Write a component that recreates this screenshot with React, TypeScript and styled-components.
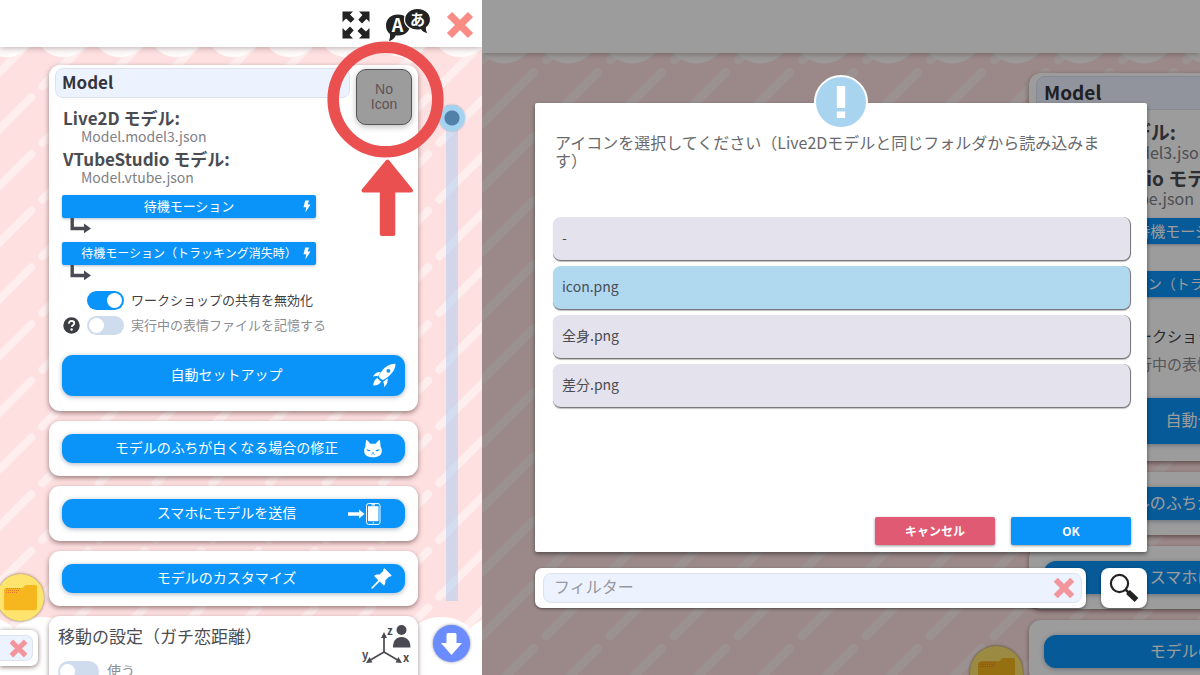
import React, { useState } from "react";
import styled, { createGlobalStyle, css, ThemeProvider } from "styled-components";

const FONT = '"Noto Sans CJK JP", "Noto Sans", sans-serif';
const BLUE = "#0a93f8";

/* Every size inside a settings panel is multiplied by the panel's scale. */
type Scaled = { theme: { k: number } };
const u = (n: number) => (p: Scaled) => `${Math.round(n * p.theme.k)}px`;

const GlobalStyle = createGlobalStyle`
  * { box-sizing: border-box; }
  body { margin: 0; font-family: ${FONT}; color: #4b4c52; }
  button, input { font-family: inherit; color: inherit; }
  button { border: 0; padding: 0; margin: 0; cursor: pointer; }
  svg { display: block; flex: none; }
`;

/* ---------- page ---------- */

const Page = styled.div`
  display: grid;
  grid-template-columns: 482px minmax(0, 1fr);
  height: 100vh;
  overflow: hidden;
`;

const Pane = styled.section`
  position: relative;
  isolation: isolate;
  display: flex;
  flex-direction: column;
  overflow: hidden;
  background: #fee0e0;
`;

const Wallpaper = styled.svg`
  position: absolute;
  inset: 0;
  z-index: -1;
  width: 100%;
  height: 100%;
`;

const Clouds = styled.svg`
  position: absolute;
  left: 0;
  bottom: 0;
  z-index: -1;
  width: 100%;
  height: 58px;
`;

const TopBar = styled.header`
  flex: none;
  display: flex;
  align-items: center;
  justify-content: flex-end;
  gap: 15px;
  height: ${u(47)};
  padding: 2px 8px 0 0;
  background: #fff;
  box-shadow: 0 1px 6px rgba(60, 30, 30, 0.35);
`;

const IconButton = styled.button`
  display: grid;
  place-items: center;
  background: none;
`;

/* ---------- settings column ---------- */

const PaneBody = styled.div<{ $left: number }>`
  flex: 1;
  min-height: 0;
  display: flex;
  align-items: flex-start;
  padding-left: ${(p) => p.$left}px;
  padding-top: ${u(18)};
`;

const CardColumn = styled.div`
  flex: none;
  display: flex;
  flex-direction: column;
  gap: ${u(10)};
  width: ${u(369)};
`;

const Card = styled.div`
  padding: ${u(13)};
  border-radius: ${u(11)};
  background: #fff;
  box-shadow: 0 2px 5px rgba(60, 20, 20, 0.5);
`;

const ModelCardBox = styled(Card)`
  padding: ${u(3)} ${u(6)} ${u(15)};
`;

const ModelTop = styled.div`
  display: flex;
  gap: ${u(6)};
`;

const ModelInfo = styled.div`
  flex: 1;
  min-width: 0;
`;

const NameInput = styled.input`
  display: block;
  width: 100%;
  height: ${u(30)};
  padding: 0 ${u(6)} ${u(3)};
  border: 1px solid #dde3ee;
  border-radius: ${u(8)};
  background: #edf2ff;
  font-size: ${u(17)};
  font-weight: 700;
  color: #33353b;
`;

const FileList = styled.dl`
  margin: ${u(11)} 0 ${u(9)};
  padding-left: ${u(8)};
  display: grid;
`;

const FileKind = styled.dt`
  font-size: ${u(17)};
  font-weight: 700;
  line-height: ${u(18)};
  white-space: nowrap;
`;

const FileName = styled.dd`
  margin: 0 0 ${u(5)};
  padding-left: ${u(18)};
  font-size: ${u(14)};
  line-height: ${u(18)};
  color: #808186;
  &:last-child { margin-bottom: 0; }
`;

const NoIconButton = styled.button`
  flex: none;
  width: ${u(56)};
  height: ${u(56)};
  margin-top: 1px;
  border: 1px solid #55565a;
  border-radius: ${u(10)};
  background: #9c9c9c;
  box-shadow: 0 2px 6px rgba(0, 0, 0, 0.25);
  font-family: "Liberation Sans Narrow", "Liberation Sans", sans-serif;
  font-size: ${u(14)};
  line-height: ${u(15)};
  color: #5f5155;
`;

const MotionList = styled.div`
  padding-left: ${u(7)};
  width: ${u(261)};
`;

const MotionButton = styled.button<{ $small?: boolean }>`
  display: grid;
  grid-template-columns: ${u(18)} 1fr ${u(18)};
  align-items: center;
  width: 100%;
  height: ${u(23)};
  padding-bottom: 1px;
  border-radius: 2px;
  background: ${BLUE};
  box-shadow: 0 1px 3px rgba(0, 40, 90, 0.3);
  color: #fff;
  font-size: ${(p) => u(p.$small ? 12 : 13)(p)};
  line-height: ${u(20)};
  white-space: nowrap;
  & > span { grid-column: 2; }
  & > svg { justify-self: end; margin-right: ${u(5)}; }
`;

const ElbowRow = styled.div`
  height: ${u(24)};
  padding-left: ${u(8)};
`;

const ToggleList = styled.div`
  display: grid;
  gap: ${u(6)};
  padding: ${u(2)} 0 0 ${u(8)};
`;

const ToggleRow = styled.div`
  display: flex;
  align-items: center;
  height: ${u(19)};
`;

const HelpSlot = styled.span`
  width: ${u(24)};
`;

const ToggleLabel = styled.label<{ $off?: boolean; $large?: boolean }>`
  display: flex;
  align-items: center;
  gap: ${(p) => u(p.$large ? 8 : 7)(p)};
  font-size: ${(p) => u(p.$large ? 14 : 13)(p)};
  line-height: ${u(19)};
  white-space: nowrap;
  color: ${(p) => (p.$off ? "#8c8d92" : "#3f4046")};
  & > span { padding-bottom: 2px; }
`;

const Switch = styled.input<{ $large?: boolean }>`
  appearance: none;
  flex: none;
  display: flex;
  align-items: center;
  width: ${(p) => u(p.$large ? 41 : 37)(p)};
  height: ${(p) => u(p.$large ? 21 : 19)(p)};
  margin: 0;
  padding: 0 2px;
  border-radius: 12px;
  background: #cfdcee;
  &::before {
    content: "";
    width: ${u(15)};
    height: ${u(15)};
    border-radius: 50%;
    background: #fff;
  }
  &:checked { background: ${BLUE}; justify-content: flex-end; }
`;

const ActionButton = styled.button<{ $tall?: boolean }>`
  display: grid;
  grid-template-columns: 1fr ${u(38)};
  align-items: center;
  width: 100%;
  height: ${(p) => u(p.$tall ? 41 : 29)(p)};
  padding: 0 ${u(4)} 0 ${u(28)};
  border-radius: ${u(11)};
  background: ${BLUE};
  box-shadow: 0 1px 5px rgba(0, 40, 90, 0.35);
  color: #fff;
  font-size: ${u(14)};
  line-height: ${u(20)};
  white-space: nowrap;
`;

const ActionLabel = styled.span`
  padding-bottom: 3px;
`;

const ActionIcon = styled.span<{ $inset: number }>`
  display: flex;
  justify-content: flex-end;
  padding-right: ${(p) => u(p.$inset)(p)};
`;

const SetupSlot = styled.div`
  padding: ${u(20)} ${u(7)} 0;
`;

const DistanceCard = styled(Card)`
  padding: ${u(8)} ${u(7)} ${u(10)} ${u(9)};
`;

const DistanceHead = styled.div`
  display: flex;
  justify-content: space-between;
  height: ${u(37)};
`;

const DistanceTitle = styled.h2`
  margin: 0;
  font-size: ${u(17)};
  font-weight: 400;
  line-height: ${u(23)};
  white-space: nowrap;
`;

/* ---------- right edge of the settings pane ---------- */

const ScrollRail = styled.div`
  flex: 1;
  align-self: stretch;
  display: flex;
  flex-direction: column;
  align-items: center;
  gap: 24px;
  padding: 40px 0 13px 3px;
`;

const ScrollRange = styled.input`
  appearance: none;
  writing-mode: vertical-lr;
  flex: 1;
  min-height: 0;
  width: 26px;
  margin: 0;
  background: none;
  &::-webkit-slider-runnable-track {
    width: 26px;
    background: linear-gradient(rgba(176, 206, 242, 0.55), rgba(176, 206, 242, 0.55)) center / 12px 100% no-repeat;
  }
  &::-webkit-slider-thumb {
    appearance: none;
    width: 26px;
    height: 26px;
    border-radius: 50%;
    background: radial-gradient(circle, #5180a8 7px, #a3d3f1 8px);
    box-shadow: 0 0 2px rgba(40, 80, 120, 0.5);
  }
`;

const DownButton = styled.button`
  flex: none;
  display: grid;
  place-items: center;
  width: 37px;
  height: 37px;
  border-radius: 50%;
  background: #6b8cff;
  box-shadow: 0 0 3px rgba(40, 40, 90, 0.6);
`;

/* ---------- floating pieces ---------- */

const FolderButton = styled.button<{ $x: number; $bottom: number }>`
  position: absolute;
  left: ${(p) => p.$x}px;
  bottom: ${(p) => p.$bottom}px;
  display: grid;
  place-items: center;
  width: ${u(47)};
  height: ${u(47)};
  border-radius: 50%;
  background: #fee36c;
  box-shadow: 0 0 3px rgba(90, 70, 20, 0.8);
`;

const CornerPanel = styled.div`
  position: absolute;
  left: 0;
  bottom: 9px;
  padding: 5px 5px 5px 0;
  border-radius: 0 7px 7px 0;
  background: #fff;
  box-shadow: 0 1px 5px rgba(60, 20, 20, 0.6);
`;

const ClearButton = styled.button<{ $corner?: boolean }>`
  display: grid;
  place-items: center;
  background: none;
  ${(p) =>
    p.$corner &&
    css`
      width: 33px;
      height: 26px;
      padding-left: 4px;
      border: 1px solid #dde3ee;
      border-left: 0;
      border-radius: 0 7px 7px 0;
      background: #edf2ff;
    `}
`;

const Annotation = styled.svg`
  position: absolute;
  top: 40px;
  right: 37px;
  pointer-events: none;
`;

/* ---------- dialog ---------- */

const Backdrop = styled.div`
  position: absolute;
  inset: 0;
  padding: 103px 53px 0;
  background: rgba(0, 0, 0, 0.39);
  display: flex;
  flex-direction: column;
  gap: 16px;
`;

const Dialog = styled.div`
  position: relative;
  display: flex;
  flex-direction: column;
  height: 449px;
  padding: 30px 16px 7px 18px;
  border-radius: 2px;
  background: #fff;
  box-shadow: 0 2px 4px rgba(0, 0, 0, 0.45);
`;

const AlertBadge = styled.span`
  position: absolute;
  top: -28px;
  left: 50%;
  margin-left: -27px;
  display: grid;
  place-items: center;
  width: 54px;
  height: 54px;
  border: 2px solid #fff;
  border-radius: 50%;
  background: #a9d4f0;
`;

const Message = styled.p`
  margin: 0;
  padding: 0 20px 0 2px;
  height: 84px;
  font-size: 16px;
  line-height: 18px;
  color: #68696d;
`;

const OptionList = styled.div`
  flex: 1;
  display: flex;
  flex-direction: column;
  gap: 5px;
`;

const Option = styled.button`
  height: 44px;
  padding: 0 9px 4px;
  border: solid #77787c;
  border-width: 0 1px 1px 0;
  border-radius: 8px;
  background: #e4e2ec;
  box-shadow: 0 1px 1px rgba(0, 0, 0, 0.25);
  font-size: 14px;
  text-align: left;
  color: #4b4c52;
  &[aria-pressed="true"] { background: #b0d9f0; }
`;

const DialogActions = styled.div`
  display: flex;
  justify-content: flex-end;
  gap: 16px;
`;

const DialogButton = styled.button<{ $danger?: boolean }>`
  width: 120px;
  height: 28px;
  padding-bottom: 2px;
  border-radius: 2px;
  background: ${(p) => (p.$danger ? "#e05a73" : BLUE)};
  box-shadow: 0 1px 3px rgba(0, 0, 0, 0.4);
  color: #fff;
  font-size: 12px;
  font-weight: 700;
`;

const FilterRow = styled.form`
  display: flex;
  gap: 15px;
  height: 40px;
`;

const FilterBox = styled.div`
  flex: 1;
  display: flex;
  padding: 5px 4px 5px 8px;
  border-radius: 7px;
  background: #fff;
  box-shadow: 0 1px 3px rgba(0, 0, 0, 0.5);
`;

const FilterField = styled.div`
  flex: 1;
  display: flex;
  align-items: center;
  padding: 0 6px 0 10px;
  border: 1px solid #dde3ee;
  border-radius: 8px;
  background: #edf2ff;
`;

const FilterInput = styled.input`
  flex: 1;
  min-width: 0;
  padding: 0 0 4px;
  border: 0;
  outline: 0;
  background: none;
  font-size: 16px;
  line-height: 24px;
  &::placeholder { color: #97999e; opacity: 1; }
`;

const SearchButton = styled.button`
  display: grid;
  place-items: center;
  width: 46px;
  border-radius: 8px;
  background: #fff;
  box-shadow: 0 1px 3px rgba(0, 0, 0, 0.5);
`;

/* ---------- drawings ---------- */

function StripeWallpaper({ id, k, x, y, scallopX, scallopY }: { id: string; k: number; x: number; y: number; scallopX: number; scallopY: number }) {
  return (
    <Wallpaper aria-hidden="true">
      <defs>
        <pattern id={`${id}-dash`} width="64" height="64" patternUnits="userSpaceOnUse" patternTransform={`translate(${x} ${y}) scale(${k})`}>
          <path d="M6 58 57.5 6.5" stroke="#fff" strokeOpacity="0.45" strokeWidth="9" strokeLinecap="round" />
        </pattern>
        <pattern id={`${id}-scallop`} width="64" height="80" patternUnits="userSpaceOnUse" patternTransform={`translate(${scallopX} ${scallopY}) scale(${k})`}>
          <circle cx="32" cy="31" r="31.500" fill="#fff" fillOpacity="0.85" />
        </pattern>
      </defs>
      <rect width="100%" height="100%" fill={`url(#${id}-dash)`} />
      <rect width="100%" height="68" fill={`url(#${id}-scallop)`} />
    </Wallpaper>
  );
}

const CloudEdge = () => (
  <Clouds aria-hidden="true">
    <defs>
      <pattern id="cloud" x="14" width="57" height="200" patternUnits="userSpaceOnUse">
        <path d="M0 12Q10 0 28.500 0T57 12V200H0z" fill="#fff" />
      </pattern>
    </defs>
    <rect width="100%" height="58" fill="url(#cloud)" />
  </Clouds>
);

const Cross = ({ size, color }: { size: number; color: string }) => (
  <svg width={size} height={size} viewBox="0 0 28 28" aria-hidden="true">
    <path d="M3.500 3.500l21 21M24.500 3.500l-21 21" stroke={color} strokeWidth="7.400" />
  </svg>
);

const ExpandIcon = () => (
  <svg width="28" height="28" viewBox="0 0 28 28" fill="#222" aria-hidden="true">
    {[0, 90, 180, 270].map((a) => (
      <path key={a} transform={`rotate(${a} 14 14)`} d="M.5.5h10.500L8 3.500l4.500 4.500-3.700 3.700L4 7.600.5 11z" />
    ))}
  </svg>
);

const LanguageIcon = () => (
  <svg width="46" height="34" viewBox="0 0 46 34" aria-hidden="true">
    <path d="M13 6.500c7 0 12 4.500 12 10.500S20 27.500 13.500 27.500c-1 0-1.800-.1-2.600-.3C9.500 30.500 6.500 32.500 3.800 33c1-1.800 1.400-4 1.200-7C2.200 24 1 21 1 17.500 1 11 6 6.500 13 6.500z" fill="#222" />
    <path d="M32.500.5C39.800.5 45.500 5 45.500 11.500c0 3.500-1.500 6-4 8-.2 2.500.4 4.500 1.800 6.300-3.300-.3-6-1.500-7.500-4-1 .2-2 .3-3.300.3-7.500 0-13-4.700-13-10.600S25 .5 32.500.5z" fill="#222" stroke="#fff" strokeWidth="1.200" />
    <text x="12.500" y="24" textAnchor="middle" fontFamily="Noto Sans CJK JP, sans-serif" fontWeight="700" fontSize="18" fill="#fff">A</text>
    <text x="32.500" y="16.500" textAnchor="middle" fontFamily="Noto Sans CJK JP, sans-serif" fontWeight="700" fontSize="15" fill="#fff">あ</text>
  </svg>
);

const BoltIcon = ({ k }: { k: number }) => (
  <svg width={9 * k} height={13 * k} viewBox="0 0 9 13" fill="#fff" aria-hidden="true">
    <path d="M3.200.5h3.900L5.600 4.600H8.500L3.300 12.500l1-5.300H1.500z" />
  </svg>
);

const ElbowArrow = ({ k }: { k: number }) => (
  <svg width={22 * k} height={17 * k} viewBox="0 0 22 17" aria-hidden="true">
    <path d="M2.200 0v10.500H15" fill="none" stroke="#4a4b52" strokeWidth="3.400" />
    <path d="M14 5.500l7 5-7 4.800z" fill="#4a4b52" />
  </svg>
);

const HelpIcon = ({ k }: { k: number }) => (
  <svg width={17 * k} height={17 * k} viewBox="0 0 17 17" aria-hidden="true">
    <circle cx="8.500" cy="8.500" r="8.200" fill="#3c3d42" />
    <path d="M5.900 6.700c0-1.700 1.100-2.700 2.700-2.700s2.700.9 2.700 2.300c0 2-2.400 1.900-2.600 3.600" fill="none" stroke="#fff" strokeWidth="1.800" />
    <circle cx="8.600" cy="12.500" r="1.200" fill="#fff" />
  </svg>
);

const RocketIcon = ({ k }: { k: number }) => (
  <svg width={24 * k} height={25 * k} viewBox="0 0 24 25" aria-hidden="true">
    <path d="M23.500.8C18 .8 13 3.500 9.700 8.200L6.800 12.800c.5 2 2.200 3.700 4.300 4.300l4.800-3.200C20.500 10.300 23.300 6 23.500.8z" fill="#fff" />
    <path d="M8.800 9c-3.600-.4-6.200 1.200-7.800 4.600 1.700-.8 3.200-.9 4.800-.2zM15.500 15.200c.8 3.500-.5 6.700-3.700 9 .7-2 .5-3.700-.7-5.300zM5.800 15c-2.900 1-4.300 3.500-4.600 7.500 4 .1 6.600-1.300 7.900-4.100-1.600-.7-2.700-1.900-3.300-3.400z" fill="#fff" />
    <circle cx="16.400" cy="7.800" r="1.900" fill={BLUE} />
  </svg>
);

const CatIcon = ({ k }: { k: number }) => (
  <svg width={20 * k} height={19 * k} viewBox="0 0 20 19" aria-hidden="true">
    <path d="M3.300.8C4.800 1.600 6 3 7.300 4.800h5.400C14 3 15.200 1.600 16.700.8c.6 2.300.9 4.500.8 6.700 1 1.700 1.500 3.400 1.300 5.200-.4 3.800-4.300 5.600-8.800 5.600s-8.400-1.800-8.800-5.600c-.2-1.800.3-3.500 1.300-5.200-.1-2.200.2-4.400.8-6.700z" fill="#fff" />
    <path d="M3.200 10.300l4.400.9c-.7 1.400-3.400 1.300-4.400-.9zM16.800 10.300l-4.400.9c.7 1.400 3.400 1.300 4.400-.9zM9 13.300h2l-1 1.100z" fill={BLUE} />
    <path d="M8.200 15.800l1.800-1.400 1.800 1.400" fill="none" stroke={BLUE} strokeWidth=".7" />
  </svg>
);

const PhoneIcon = ({ k }: { k: number }) => (
  <svg width={33 * k} height={22 * k} viewBox="0 0 33 22" aria-hidden="true">
    <path d="M0 9.300h11V6.500l5.500 4.500-5.500 4.500v-2.800H0z" fill="#fff" />
    <rect x="18.500" y=".6" width="13.500" height="20.800" rx="2" fill="none" stroke="#fff" strokeWidth="1" />
    <path d="M20 3.200h10.500v15H20z" fill="#fff" />
    <path d="M23.500 1.900h3.500M24.600 19.800h1.400" stroke="#fff" strokeWidth="1.100" />
  </svg>
);

const PinIcon = ({ k }: { k: number }) => (
  <svg width={21 * k} height={21 * k} viewBox="0 0 21 21" fill="#fff" aria-hidden="true">
    <path d="M13.500.3l7.200 7.200-1.500 1.300-1.300-.1-3.600 3.900c.3 2 0 3.700-1.300 5.200l-4.200-4.200L1.600 20.500l-1.300.2.200-1.300 6.800-7.200L3.100 8c1.500-1.300 3.200-1.700 5.200-1.300l3.900-3.600-.1-1.400z" />
  </svg>
);

const FolderIcon = ({ k }: { k: number }) => (
  <svg width={33 * k} height={26 * k} viewBox="0 0 33 26" fill="#f6b61d" aria-hidden="true">
    <path d="M2.500 3h16l2.200-2.200c.5-.5 1-.7 1.700-.7H31c1.200 0 2 .8 2 2v21c0 1.200-1 2.200-2.200 2.200H2.200A2.200 2.200 0 0 1 0 23V5.500C0 4 1 3 2.500 3z" />
    <path d="M3 3.500h14M2 5.500h13M2 7.500h11" stroke="#e8752b" strokeWidth="1" strokeDasharray="1 1" />
  </svg>
);

const AxisIcon = ({ k }: { k: number }) => (
  <svg width={50 * k} height={42 * k} viewBox="0 0 50 42" aria-hidden="true">
    <path d="M23 28V11M23 28l-14 8.300M23 28l14 8.300" stroke="#4a4b52" strokeWidth="1.700" fill="none" />
    <path d="M23 8l3 6h-6zM5 39l3.600-6 2.800 5.400zM41 39l-3.600-6-2.800 5.400z" fill="#4a4b52" />
    <circle cx="40.500" cy="6" r="5" fill="#4a4b52" />
    <path d="M32 23.500c0-7 3.200-10.500 8.500-10.500s9 3.500 9 10.500z" fill="#4a4b52" />
    <g fill="#4a4b52" fontFamily="Noto Sans CJK JP, sans-serif" fontWeight="700" fontSize="11">
      <text x="26" y="11">z</text>
      <text x="1" y="35">y</text>
      <text x="42" y="38">x</text>
    </g>
  </svg>
);

const CircleAndArrow = () => (
  <Annotation width="118" height="198" viewBox="0 0 118 198" aria-hidden="true">
    <circle cx="58.500" cy="59.500" r="52.300" fill="none" stroke="#eb5050" strokeWidth="11.600" />
    <path d="M60.500 121.500L84 150.500H36.500z" fill="#eb5050" stroke="#eb5050" strokeWidth="4" strokeLinejoin="round" />
    <path d="M54.800 148h11.500v46H54.800z" fill="#eb5050" stroke="#eb5050" strokeWidth="4" strokeLinejoin="round" />
  </Annotation>
);

/* ---------- settings panel ---------- */

const ACTIONS = [
  { label: "モデルのふちが白くなる場合の修正", Icon: CatIcon, inset: 18 },
  { label: "スマホにモデルを送信", Icon: PhoneIcon, inset: 20 },
  { label: "モデルのカスタマイズ", Icon: PinIcon, inset: 9 },
];

function SettingsColumn({ k, id }: { k: number; id: string }) {
  return (
    <CardColumn>
      <ModelCardBox>
        <ModelTop>
          <ModelInfo>
            <NameInput aria-label="モデル名" defaultValue="Model" />
            <FileList>
              <FileKind>Live2D モデル:</FileKind>
              <FileName>Model.model3.json</FileName>
              <FileKind>VTubeStudio モデル:</FileKind>
              <FileName>Model.vtube.json</FileName>
            </FileList>
          </ModelInfo>
          <NoIconButton type="button">
            No
            <br />
            Icon
          </NoIconButton>
        </ModelTop>
        <MotionList>
          <MotionButton type="button">
            <span>待機モーション</span>
            <BoltIcon k={k} />
          </MotionButton>
          <ElbowRow>
            <ElbowArrow k={k} />
          </ElbowRow>
          <MotionButton type="button" $small>
            <span>待機モーション（トラッキング消失時）</span>
            <BoltIcon k={k} />
          </MotionButton>
          <ElbowRow>
            <ElbowArrow k={k} />
          </ElbowRow>
        </MotionList>
        <ToggleList>
          <ToggleRow>
            <HelpSlot />
            <ToggleLabel htmlFor={`${id}-share`}>
              <Switch id={`${id}-share`} type="checkbox" defaultChecked />
              <span>ワークショップの共有を無効化</span>
            </ToggleLabel>
          </ToggleRow>
          <ToggleRow>
            <HelpSlot>
              <HelpIcon k={k} />
            </HelpSlot>
            <ToggleLabel htmlFor={`${id}-remember`} $off>
              <Switch id={`${id}-remember`} type="checkbox" />
              <span>実行中の表情ファイルを記憶する</span>
            </ToggleLabel>
          </ToggleRow>
        </ToggleList>
        <SetupSlot>
          <ActionButton type="button" $tall>
            <ActionLabel>自動セットアップ</ActionLabel>
            <ActionIcon $inset={5}>
              <RocketIcon k={k} />
            </ActionIcon>
          </ActionButton>
        </SetupSlot>
      </ModelCardBox>
      {ACTIONS.map(({ label, Icon, inset }) => (
        <Card key={label}>
          <ActionButton type="button">
            <ActionLabel>{label}</ActionLabel>
            <ActionIcon $inset={inset}>
              <Icon k={k} />
            </ActionIcon>
          </ActionButton>
        </Card>
      ))}
      <DistanceCard>
        <DistanceHead>
          <DistanceTitle>移動の設定（ガチ恋距離）</DistanceTitle>
          <AxisIcon k={k} />
        </DistanceHead>
        <ToggleLabel htmlFor={`${id}-distance`} $off $large>
          <Switch id={`${id}-distance`} type="checkbox" $large />
          <span>使う</span>
        </ToggleLabel>
      </DistanceCard>
    </CardColumn>
  );
}

const FILES = ["-", "icon.png", "全身.png", "差分.png"];

export default function App() {
  const [selected, setSelected] = useState("icon.png");
  return (
    <Page>
      <GlobalStyle />
      <ThemeProvider theme={{ k: 1 }}>
        <Pane>
          <StripeWallpaper id="main" k={0.886} x={434} y={91.500} scallopX={35} scallopY={2} />
          <CloudEdge />
          <TopBar>
            <IconButton type="button" aria-label="全画面">
              <ExpandIcon />
            </IconButton>
            <IconButton type="button" aria-label="言語">
              <LanguageIcon />
            </IconButton>
            <IconButton type="button" aria-label="閉じる">
              <Cross size={28} color="#fa8c86" />
            </IconButton>
          </TopBar>
          <PaneBody $left={49}>
            <SettingsColumn k={1} id="main" />
            <ScrollRail>
              <ScrollRange type="range" aria-label="スクロール" min={0} max={100} defaultValue={0} />
              <DownButton type="button" aria-label="下へ">
                <svg width="21" height="22" viewBox="0 0 21 22" fill="#fff" aria-hidden="true">
                  <path d="M7 0h7q1.500 0 1.500 1.500V10H21L10.500 22 0 10h5.500V1.500Q5.500 0 7 0z" />
                </svg>
              </DownButton>
            </ScrollRail>
          </PaneBody>
          <FolderButton type="button" aria-label="フォルダ" $x={-3} $bottom={54}>
            <FolderIcon k={1} />
          </FolderButton>
          <CornerPanel>
            <ClearButton type="button" aria-label="クリア" $corner>
              <Cross size={19} color="#f3959c" />
            </ClearButton>
          </CornerPanel>
          <CircleAndArrow />
        </Pane>
      </ThemeProvider>

      <ThemeProvider theme={{ k: 1.13 }}>
        <Pane>
          <StripeWallpaper id="rear" k={1} x={58} y={2} scallopX={-10} scallopY={1} />
          <TopBar />
          <PaneBody $left={547}>
            <SettingsColumn k={1.13} id="rear" />
          </PaneBody>
          <FolderButton type="button" aria-label="フォルダ" $x={488} $bottom={-24}>
            <FolderIcon k={1.13} />
          </FolderButton>
          <Backdrop>
            <Dialog role="dialog" aria-labelledby="icon-message">
              <AlertBadge>
                <svg width="10" height="34" viewBox="0 0 10 34" fill="#fff" aria-hidden="true">
                  <path d="M.8 1h8.400v22H.8zM.8 26.500h8.400V33H.8z" />
                </svg>
              </AlertBadge>
              <Message id="icon-message">
                アイコンを選択してください（Live2Dモデルと同じフォルダから読み込みます）
              </Message>
              <OptionList>
                {FILES.map((name) => (
                  <Option key={name} type="button" aria-pressed={name === selected} onClick={() => setSelected(name)}>
                    {name}
                  </Option>
                ))}
              </OptionList>
              <DialogActions>
                <DialogButton type="button" $danger>
                  キャンセル
                </DialogButton>
                <DialogButton type="button">OK</DialogButton>
              </DialogActions>
            </Dialog>
            <FilterRow onSubmit={(e) => e.preventDefault()}>
              <FilterBox>
                <FilterField>
                  <FilterInput aria-label="フィルター" placeholder="フィルター" />
                  <ClearButton type="button" aria-label="クリア">
                    <Cross size={22} color="#f3959c" />
                  </ClearButton>
                </FilterField>
              </FilterBox>
              <SearchButton type="submit" aria-label="検索">
                <svg width="30" height="30" viewBox="0 0 30 30" aria-hidden="true">
                  <circle cx="10.500" cy="10.500" r="8.600" fill="none" stroke="#222" strokeWidth="2.200" />
                  <path d="M16.500 16.500l3 3" stroke="#222" strokeWidth="2.500" />
                  <path d="M19 19l8.500 8" stroke="#222" strokeWidth="5.500" />
                </svg>
              </SearchButton>
            </FilterRow>
          </Backdrop>
        </Pane>
      </ThemeProvider>
    </Page>
  );
}
